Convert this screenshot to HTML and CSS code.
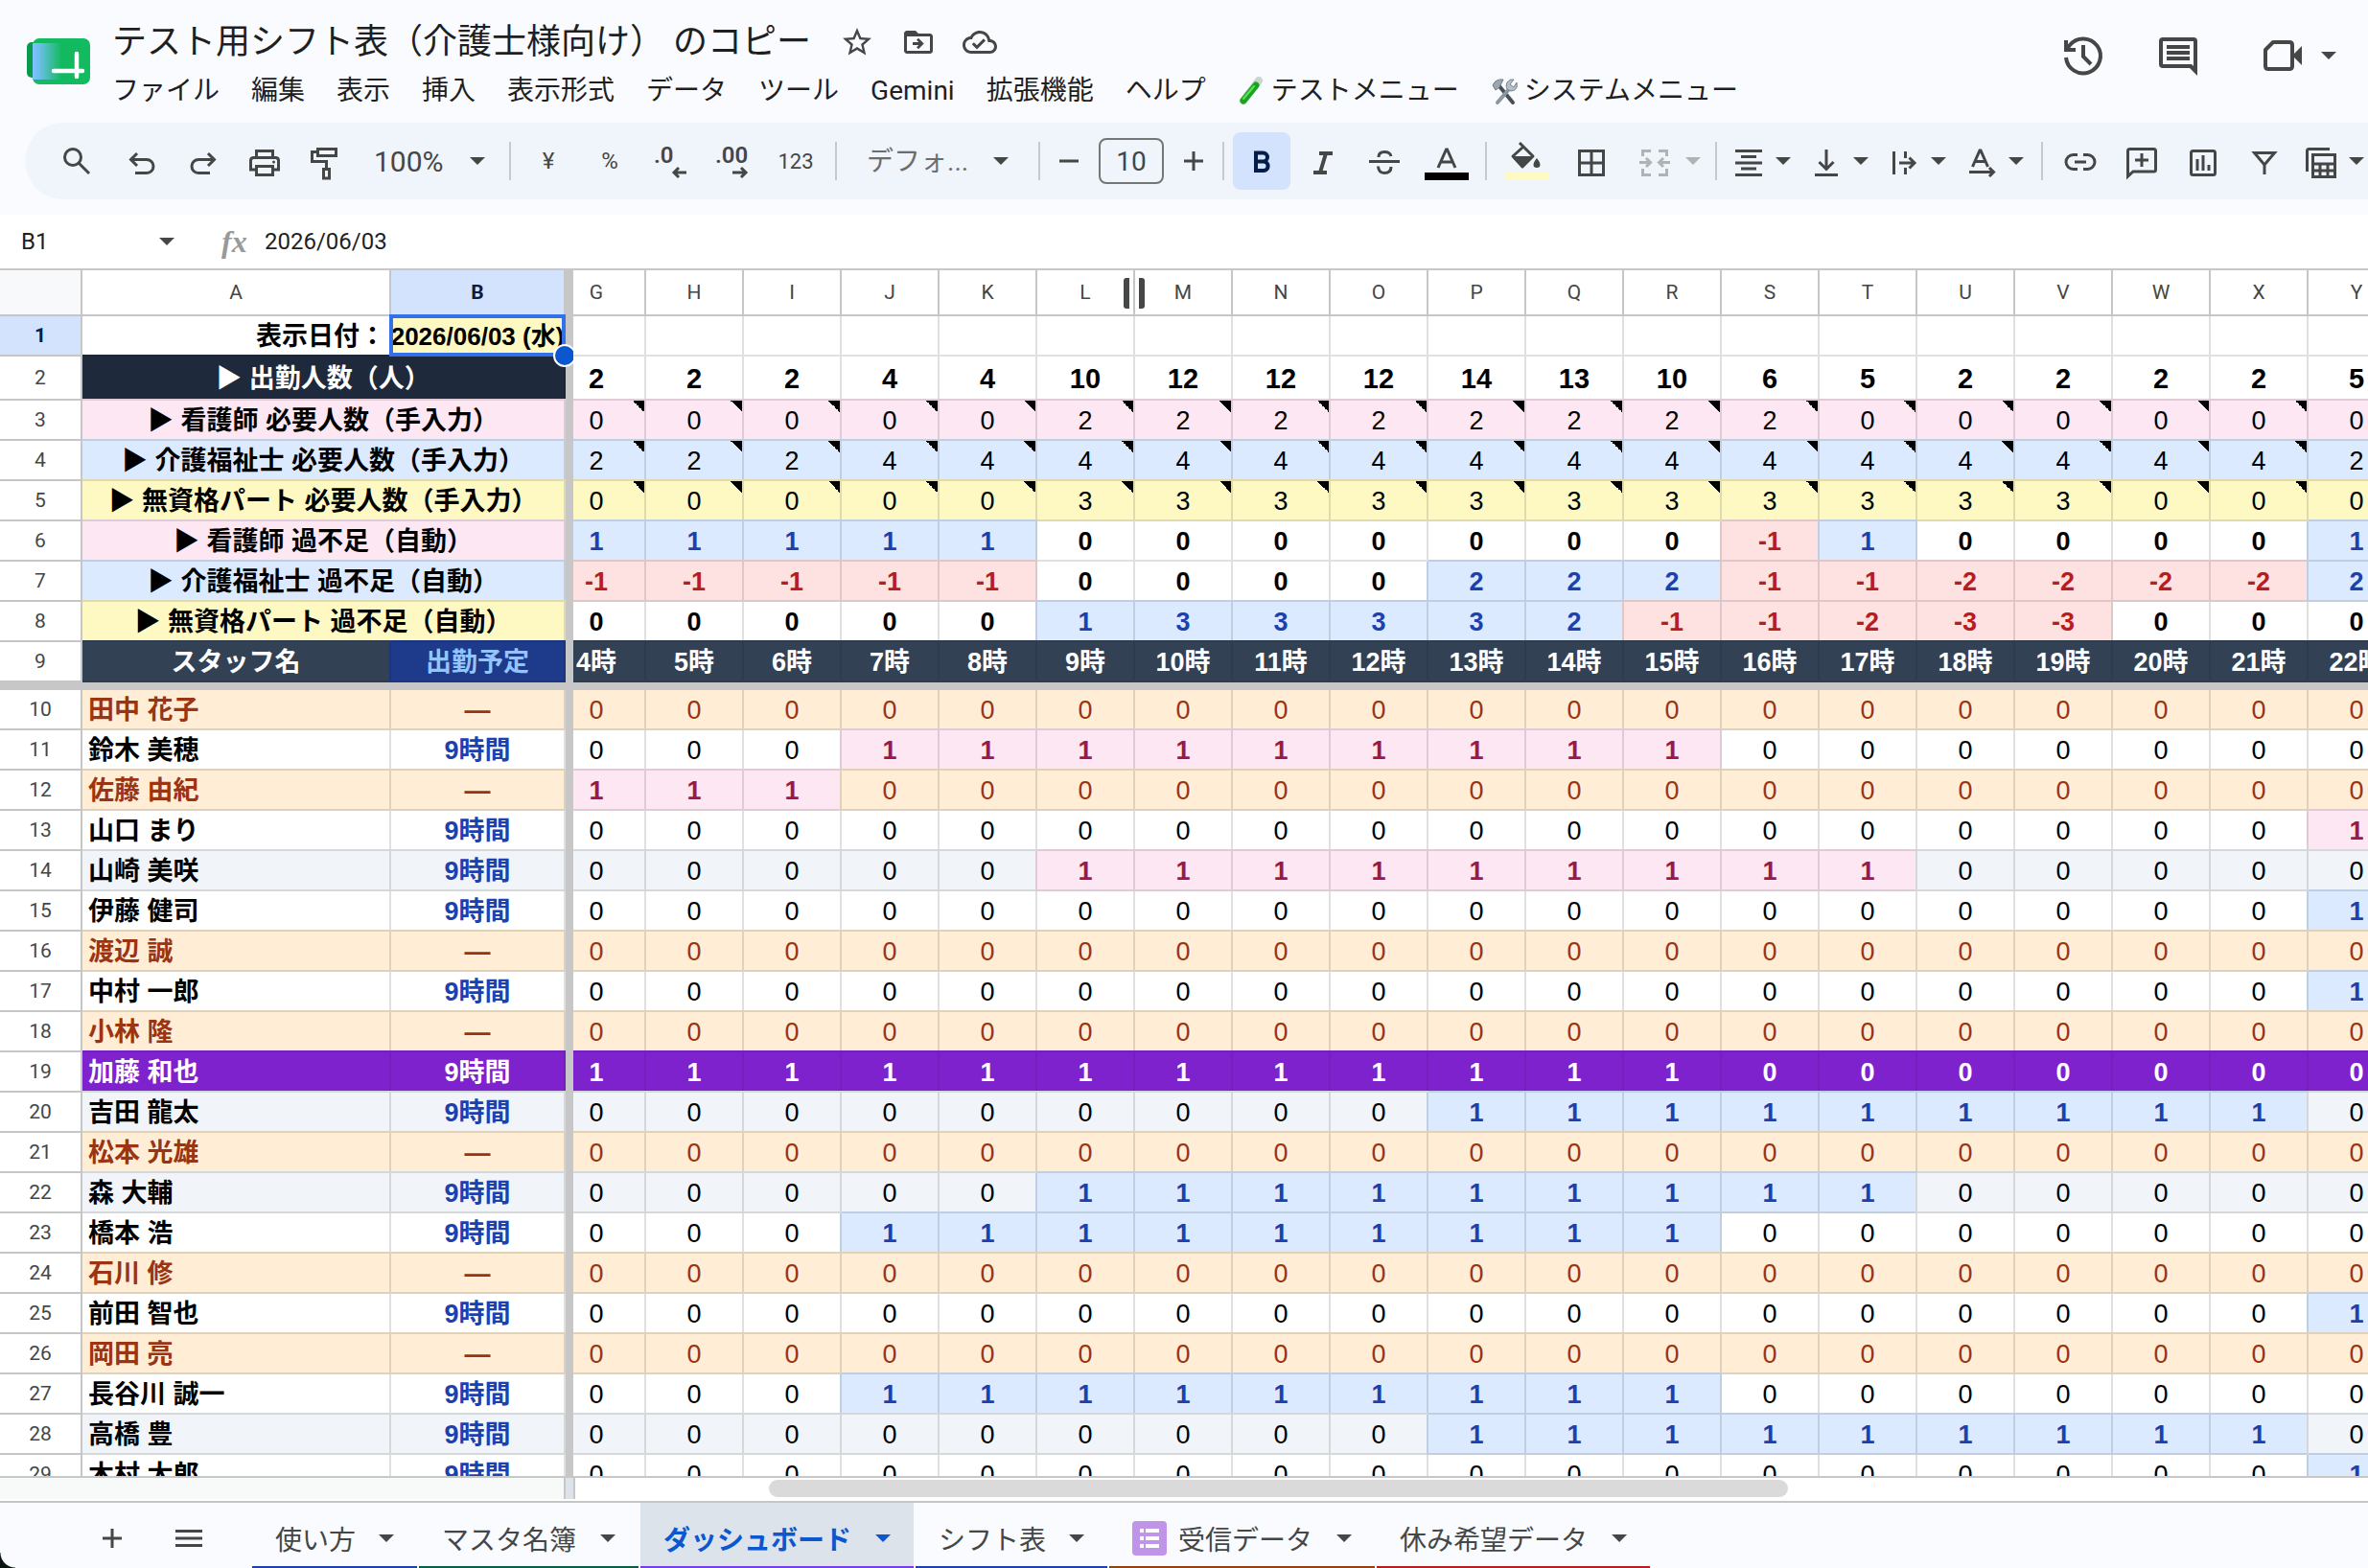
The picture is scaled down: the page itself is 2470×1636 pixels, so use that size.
FILE: index.html
```html
<!DOCTYPE html>
<html lang="ja">
<head>
<meta charset="utf-8">
<title>テスト用シフト表（介護士様向け） のコピー</title>
<link rel="stylesheet" href="styles.css">
</head>
<body>
<header class="top">
  <a class="logo" href="#" aria-label="ホーム">
    <svg width="66" height="48" viewBox="0 0 66 48">
      <defs><linearGradient id="lg" x1="0" x2="1" y1="0" y2="0"><stop offset="0" stop-color="#7cc3ff"/><stop offset=".12" stop-color="#6fc0ee"/><stop offset=".6" stop-color="#12b95f"/></linearGradient></defs>
      <rect x="0" y="4" width="20" height="37" rx="5" fill="#0a9a4c"/>
      <rect x="6" y="0" width="60" height="48" rx="7" fill="#12bb60"/>
      <rect x="6" y="5" width="50" height="38" fill="url(#lg)"/>
      <path d="M28 34H58M52 16V40" stroke="#fff" stroke-width="4.5" stroke-linecap="round"/>
    </svg>
  </a>
  <div class="head-main">
    <div class="title-row">
      <h1 class="title">テスト用シフト表（介護士様向け） のコピー</h1>
      <button class="mini" aria-label="スター"><svg width="36" height="36" viewBox="0 0 24 24"><path fill="currentColor" d="M22 9.24l-7.19-.62L12 2 9.19 8.63 2 9.24l5.46 4.73L5.82 21 12 17.27 18.18 21l-1.63-7.03L22 9.24zM12 15.4l-3.76 2.27 1-4.28-3.32-2.88 4.38-.38L12 6.1l1.71 4.04 4.38.38-3.32 2.88 1 4.28L12 15.4z"/></svg></button>
      <button class="mini" aria-label="移動"><svg width="36" height="36" viewBox="0 0 24 24"><path fill="currentColor" fill-rule="evenodd" d="M20 6h-8l-2-2H4c-1.100 0-2 .9-2 2v12c0 1.100.9 2 2 2h16c1.100 0 2-.9 2-2V8c0-1.100-.9-2-2-2zm0 12H4V8h16v10zM8 12v2h4.200l-1.500 1.500 1.300 1.300 3.800-3.800L12 9.200l-1.300 1.300 1.500 1.500z"/></svg></button>
      <button class="mini" aria-label="保存済み"><svg width="36" height="36" viewBox="0 0 24 24"><path fill="currentColor" d="M19.35 10.04C18.67 6.59 15.64 4 12 4 9.11 4 6.6 5.64 5.35 8.04 2.34 8.36 0 10.91 0 14c0 3.310 2.690 6 6 6h13c2.760 0 5-2.240 5-5 0-2.640-2.050-4.780-4.650-4.960zM19 18H6c-2.210 0-4-1.790-4-4 0-2.050 1.530-3.760 3.560-3.970l1.070-.11.5-.95C8.080 7.140 9.940 6 12 6c2.620 0 4.880 1.860 5.390 4.430l.3 1.500 1.530.11c1.560.1 2.780 1.410 2.780 2.960 0 1.650-1.350 3-3 3zm-9-3.820l-2.090-2.090L6.500 13.500 10 17l6.010-6.010-1.410-1.410z"/></svg></button>
    </div>
    <nav class="menu">
      <button>ファイル</button><button>編集</button><button>表示</button><button>挿入</button><button>表示形式</button><button>データ</button><button>ツール</button><button>Gemini</button><button>拡張機能</button><button>ヘルプ</button>
      <button><svg width="28" height="30" viewBox="0 0 28 30"><path d="M22 4L6 25" stroke="#c9d6cf" stroke-width="8" stroke-linecap="round"/><path d="M19 9L6 25" stroke="#17a51f" stroke-width="7" stroke-linecap="round"/><path d="M17 10L6 23" stroke="#5fe05a" stroke-width="2" stroke-linecap="round"/></svg>テストメニュー</button>
      <button><svg width="28" height="30" viewBox="0 0 28 30"><path d="M9 10L23 27" stroke="#4b4f55" stroke-width="4" stroke-linecap="round"/><path d="M2 9Q5 2 13 3L9 11L5 14Z" fill="#9aa7b3" stroke="#6d7882"/><path d="M19 13L7 27" stroke="#8c969f" stroke-width="4" stroke-linecap="round"/><path d="M24 3L20 8L24 11L27 6Q29 14 21 15Q14 13 17 6Q20 2 24 3Z" fill="#b4bfc9" stroke="#77828c"/></svg>システムメニュー</button>
    </nav>
  </div>
  <div class="head-actions">
    <button aria-label="変更履歴"><svg width="48" height="48" viewBox="0 0 48 48" fill="none" stroke="currentColor" stroke-width="4"><path d="M6 26A18 18 0 1 0 10 13L6 18"/><path d="M6 8V18H16M24 13V25L32 33"/></svg></button>
    <button aria-label="コメント"><svg width="48" height="48" viewBox="0 0 48 48"><path fill="currentColor" fill-rule="evenodd" d="M8 5H40Q44 5 44 9V45L36 37H8Q4 37 4 33V9Q4 5 8 5ZM8 9V33H38L40 35V9ZM12 13H36V17H12ZM12 19H36V23H12ZM12 25H36V29H12Z"/></svg></button>
    <button class="meet" aria-label="ビデオ通話"><svg width="48" height="48" viewBox="0 0 48 48"><path d="M14 10H31Q34 10 34 13V35Q34 38 31 38H9Q6 38 6 35V18Z" fill="none" stroke="currentColor" stroke-width="4" stroke-linejoin="round"/><path d="M34 24L44 14V34Z" fill="currentColor"/></svg><i class="caret"></i></button>
  </div>
</header>

<div class="toolbar" role="toolbar">
  <button class="tb search" aria-label="検索"><svg class="ic" viewBox="0 0 40 40"><circle cx="16" cy="16" r="8.500"/><path d="M22 22L33 33"/></svg></button>
  <button class="tb" aria-label="元に戻す"><svg class="ic" viewBox="0 0 40 40"><path d="M15 12L8.500 18.500L15 25M9 18.500H25A6.500 6.500 0 0 1 25 32.500H13"/></svg></button>
  <button class="tb" aria-label="やり直し"><svg class="ic" viewBox="0 0 40 40"><path d="M25 12L31.500 18.500L25 25M31 18.500H15A6.500 6.500 0 0 0 15 32.500H27"/></svg></button>
  <button class="tb" aria-label="印刷"><svg class="ic" viewBox="0 0 40 40"><path d="M11.500 16V9.500H28.500V16M11 29H5.500V19.500Q5.500 16.500 8.500 16.500H31.500Q34.500 16.500 34.500 19.500V29H29M11.500 25.500H28.500V34.500H11.500Z"/><circle class="dot" cx="29.500" cy="21" r="1.500"/></svg></button>
  <button class="tb" aria-label="書式を貼り付け"><svg class="ic" viewBox="2 0 40 40"><path d="M13.500 7.500H32.500V14.500H13.500ZM13 10.500H7.500V20.500H22.500V27M19.500 28.500H25.500V38H19.500Z"/></svg></button>
  <span class="pick zoom"><select aria-label="ズーム"><option>100%</option></select><i class="caret"></i></span>
  <i class="sep"></i>
  <button class="tb t24">¥</button>
  <button class="tb t24">%</button>
  <button class="tb" aria-label="小数点以下を減らす"><svg class="ic" viewBox="0 0 40 40"><text x="2" y="22">.0</text><path d="M36 32H23M28 27L23 32L28 37"/></svg></button>
  <button class="tb" aria-label="小数点以下を増やす"><svg class="ic" viewBox="0 0 40 40"><text x="2" y="22">.00</text><path d="M20 32H34M29 27L34 32L29 37"/></svg></button>
  <button class="tb t22">123</button>
  <i class="sep"></i>
  <span class="pick face"><select aria-label="フォント"><option>デフォ...</option></select><i class="caret"></i></span>
  <i class="sep"></i>
  <button class="tb step" aria-label="縮小"><svg width="22" height="22" viewBox="0 0 22 22"><path d="M1 11H21" stroke="currentColor" stroke-width="3"/></svg></button>
  <input class="size" aria-label="フォントサイズ" value="10">
  <button class="tb step" aria-label="拡大"><svg width="22" height="22" viewBox="0 0 22 22"><path d="M1 11H21M11 1V21" stroke="currentColor" stroke-width="3"/></svg></button>
  <i class="sep"></i>
  <button class="tb on" aria-label="太字"><svg class="ic" viewBox="0 0 40 40"><path class="heavy" d="M14 11.500H21.500A4.500 4.500 0 0 1 21.500 20.500H14ZM14 20.500H22.500A4.800 4.800 0 0 1 22.500 30H14Z"/></svg></button>
  <button class="tb" aria-label="斜体"><svg class="ic" viewBox="0 0 40 40"><path class="heavy" d="M16 12H30M10 32H24M23 12L17 32"/></svg></button>
  <button class="tb" aria-label="取り消し線"><svg class="ic" viewBox="0 0 40 40"><path d="M4 20.500H36M27 15Q26 10.500 20 10.500Q14 10.500 14 16M13.500 25.500Q14 32.500 20 32.500Q27 32.500 27 26"/></svg></button>
  <button class="tb w62" aria-label="文字色"><svg width="46" height="40" viewBox="0 0 46 40"><path d="M14 27L22.500 8H23.500L32 27M17 21H29" fill="none" stroke="currentColor" stroke-width="3"/><rect y="32" width="46" height="8"/></svg></button>
  <i class="sep"></i>
  <button class="tb w66" aria-label="塗りつぶし"><svg width="46" height="44" viewBox="0 -2 46 44"><path d="M15 1L29 15L18 26L8 15L18 6" fill="none" stroke="currentColor" stroke-width="3" stroke-linejoin="round"/><path d="M8 15H29L18 26Z" fill="currentColor"/><path d="M33 17Q38 23 36 26Q33 28 30 26Q28 23 33 17Z" fill="currentColor"/><rect y="32" width="46" height="8" fill="#fff9c4"/></svg></button>
  <button class="tb" aria-label="枠線"><svg class="ic" viewBox="0 0 40 40"><path d="M7.500 9.500H32.500V34.500H7.500ZM20 9V35M7 22H33"/></svg></button>
  <button class="tb merge" aria-label="セルを結合"><svg class="ic" viewBox="0 0 40 40"><path d="M16 9.500H7.500V15M24 9.500H32.500V15M16 34.500H7.500V28M24 34.500H32.500V28M4 21.500H15M11 17L15.500 21.500L11 26M36 21.500H25M29 17L24.500 21.500L29 26"/></svg><i class="caret"></i></button>
  <i class="sep"></i>
  <button class="tb duo" aria-label="水平方向の配置"><svg class="ic" viewBox="0 0 40 40"><path d="M6 9.500H34M12 15.500H28M6 22H34M12 28H28M6 34.500H34"/></svg><i class="caret"></i></button>
  <button class="tb duo" aria-label="垂直方向の配置"><svg class="ic" viewBox="0 0 40 40"><path d="M20 8V28M12.500 21L20 28.500L27.500 21M8 34.500H32"/></svg><i class="caret"></i></button>
  <button class="tb duo" aria-label="折り返し"><svg class="ic" viewBox="0 0 40 40"><path d="M9.500 10V34M21.500 10V17M21.500 27V34M15 22H30M25.500 16.500L31 22L25.500 27.500"/></svg><i class="caret"></i></button>
  <button class="tb duo" aria-label="回転"><svg class="ic" viewBox="0 0 40 40"><path d="M10.500 26L18 9H19L26.500 26M13 20.500H24M7 31.500H32M28 27L32.500 31.500L28 36"/></svg><i class="caret"></i></button>
  <i class="sep"></i>
  <button class="tb" aria-label="リンク"><svg class="ic" viewBox="0 0 40 40"><path d="M17 13.500H12.500A7 7 0 0 0 12.500 28.500H17M23 13.500H27.500A7 7 0 0 1 27.500 28.500H23M14 21H26"/></svg></button>
  <button class="tb" aria-label="コメントを挿入"><svg class="ic" viewBox="0 0 40 40"><path d="M5.500 36V9.500Q5.500 7.500 7.500 7.500H32.500Q34.500 7.500 34.500 9.500V29Q34.500 31 32.500 31H11ZM20 12V26M13 19H27"/></svg></button>
  <button class="tb" aria-label="グラフ"><svg class="ic" viewBox="0 0 40 40"><path d="M9.500 9.500H30.500Q32.500 9.500 32.500 11.500V32.500Q32.500 34.500 30.500 34.500H9.500Q7.500 34.500 7.500 32.500V11.500Q7.500 9.500 9.500 9.500ZM14 18V30M20 14V30M26 24V30"/></svg></button>
  <button class="tb" aria-label="フィルタ"><svg class="ic" viewBox="0 0 40 40"><path d="M9.500 11.500H30.500L20 24ZM20 23V34"/></svg></button>
  <button class="tb last" aria-label="表"><svg class="ic" viewBox="0 0 40 40"><path d="M5.500 31V9.500Q5.500 7.500 7.500 7.500H29M11.500 13.500H34.500V36.500H11.500ZM11 23H35M11 30H35M19 23V37M27 23V37"/></svg><i class="caret"></i></button>
</div>

<div class="formula">
  <input class="namebox" aria-label="名前ボックス" value="B1">
  <button class="plain" aria-label="名前の一覧"><i class="caret"></i></button>
  <label class="fx" for="fx">fx</label>
  <input class="fxin" id="fx" value="2026/06/03">
</div>

<main class="sheet">
  <div class="pane frozen"><table id="left"></table><i class="vbar"></i></div>
  <div class="pane scrolled"><table id="right"></table></div>
</main>

<div class="hscroll"><i class="gutter"></i><i class="grip"></i><div class="track"><i class="thumb"></i></div></div>

<footer class="tabs">
  <div class="tab-tools">
    <button class="plain" aria-label="シートを追加"><svg width="40" height="40" viewBox="0 0 40 40"><path d="M10 20H30M20 10V30" stroke="currentColor" stroke-width="3"/></svg></button>
    <button class="plain" aria-label="すべてのシート"><svg width="40" height="40" viewBox="0 0 40 40"><path d="M6 12.500H34M6 20H34M6 27.500H34" stroke="currentColor" stroke-width="3"/></svg></button>
  </div>
  <button class="tab u-blue">使い方<i class="caret"></i></button>
  <button class="tab u-green">マスタ名簿<i class="caret"></i></button>
  <button class="tab u-violet active">ダッシュボード<i class="caret"></i></button>
  <button class="tab u-blue">シフト表<i class="caret"></i></button>
  <button class="tab u-brown"><svg class="form" width="36" height="36" viewBox="0 0 36 36"><rect width="36" height="36" rx="4" fill="#c094e8"/><path d="M8 10H12M14 10H28M8 18H12M14 18H28M8 26H12M14 26H28" stroke="#fff" stroke-width="4"/></svg>受信データ<i class="caret"></i></button>
  <button class="tab u-red">休み希望データ<i class="caret"></i></button>
  <i class="corner"></i>
</footer>
<script src="app.js"></script>
</body>
</html>
```
FILE: styles.css
```css
* { box-sizing: border-box; }
html, body { height: 100%; }
body {
  margin: 0;
  display: flex;
  flex-direction: column;
  overflow: hidden;
  background: #f9fbfe;
  color: #1f1f1f;
  font-family: Roboto, "Noto Sans CJK JP", sans-serif;
}
button, input, select { font: inherit; color: inherit; margin: 0; padding: 0; border: 0; background: none; outline: 0; }
button { display: inline-flex; align-items: center; justify-content: center; }
svg { display: block; flex: none; }
i { font-style: normal; flex: none; }

.caret { width: 16px; height: 8px; background: currentColor; clip-path: polygon(0 0, 100% 0, 50% 100%); }

/* Title and menus */
.top { display: flex; flex: none; height: 128px; color: #444746; }
.logo { margin: 40px 23px 0 28px; }
.head-main { flex: 1; min-width: 0; padding-top: 17px; }
.title-row { display: flex; align-items: center; height: 54px; }
.title { margin: 0 30px 0 0; font-size: 36px; font-weight: 400; line-height: 54px; color: #1f1f1f; white-space: nowrap; }
.mini { width: 36px; height: 36px; margin-right: 28px; }
.menu { display: flex; gap: 33px; height: 48px; color: #1f1f1f; }
.menu button { font-size: 28px; line-height: 48px; white-space: nowrap; gap: 7px; }
.head-actions { display: flex; align-items: flex-start; gap: 51px; padding: 34px 33px 0 0; }
.meet { gap: 16px; padding-left: 10px; }

/* Toolbar */
.toolbar {
  display: flex;
  flex: none;
  align-items: center;
  gap: 4px;
  height: 80px;
  margin-left: 26px;
  padding-left: 24px;
  border-radius: 40px 0 0 40px;
  background: #f0f4fb;
  color: #444746;
  overflow: hidden;
}
.tb { flex: none; width: 60px; height: 60px; border-radius: 8px; }
.search { margin-right: 4px; }
.ic { width: 40px; height: 40px; fill: none; stroke: currentColor; stroke-width: 3; }
.ic text { fill: currentColor; stroke: none; font-size: 24px; font-weight: 600; }
.ic .dot { fill: currentColor; stroke: none; }
.ic .heavy { stroke-width: 4; }
.sep { width: 2px; height: 40px; margin: 0 5px; background: #c7c9cc; }
.t24 { font-size: 24px; }
.t22 { font-size: 22px; width: 64px; }
.w62 { width: 62px; }
.w66 { width: 66px; }
.step { width: 42px; }
.on { background: #d3e3fd; color: #041e49; }
.pick { display: grid; flex: none; align-items: center; height: 60px; }
.pick > * { grid-area: 1 / 1; }
.pick select { appearance: none; width: 100%; height: 60px; font-size: 28px; }
.pick .caret { justify-self: end; pointer-events: none; }
.zoom { width: 148px; padding: 0 16px; }
.zoom select { font-size: 30px; }
.face { width: 192px; padding: 0 22px; }
.face select { color: #6b6e6e; }
.face .caret { color: #444746; }
.size { width: 68px; height: 48px; margin: 0 6px; border: 2px solid #747775; border-radius: 8px; font-size: 28px; text-align: center; }
.merge { width: 86px; justify-content: flex-start; padding-left: 12px; gap: 12px; color: #b0b3b6; }
.duo { width: 77px; justify-content: flex-start; padding-left: 4px; gap: 8px; }
.last { width: 80px; justify-content: flex-start; padding-left: 5px; gap: 9px; }

/* Formula bar */
.formula { display: flex; flex: none; align-items: center; height: 58px; margin-top: 16px; background: #fff; border-bottom: 2px solid #c7c7c7; font-size: 24px; color: #444746; }
.namebox { width: 144px; padding-left: 22px; color: #1f1f1f; }
.plain { flex: none; }
.formula .plain { width: 60px; height: 48px; }
.fx { width: 45px; margin-left: 27px; font: italic 700 32px "Liberation Serif", serif; color: #999; }
.fxin { flex: 1; color: #1f1f1f; }

/* Grid */
.sheet { display: flex; flex: 1; min-height: 0; background: #fff; overflow: hidden; font: 27px "Liberation Sans", "Noto Sans CJK JP", sans-serif; color: #000; }
.pane { overflow: hidden; }
.frozen { display: flex; flex: none; }
.scrolled { flex: 1; min-width: 0; }
.scrolled table { margin-left: -26px; }
.vbar { width: 8px; background: #c7c7c7; }
table { flex: none; table-layout: fixed; border-collapse: separate; border-spacing: 0; }
#left { width: 590px; }
#right { width: 1938px; }
.w-num { width: 86px; }
.w-a { width: 322px; }
.w-b { width: 182px; }
.w-h { width: 102px; }
tr { height: 42px; }
.r-head { height: 48px; }
.r-2 { height: 46px; }
.r-gap { height: 8px; }
th, td {
  --bg: #fff;
  --line: color-mix(in srgb, var(--bg), #000 12%);
  padding: 2px 0 0;
  border: solid var(--line);
  border-width: 0 2px 2px 0;
  background: var(--bg);
  text-align: center;
  white-space: nowrap;
  overflow: hidden;
  line-height: 36px;
}
th { position: relative; padding: 0; border-color: #c4c7c5; font: 400 21px/36px Roboto, sans-serif; color: #444746; }
th.corner-cell { background: #f8f9fa; }
th.sel { background: #d3e3fd; color: #041e49; font-weight: 700; }
.r-gap td { position: relative; padding: 0; border: 0; background: #c7c7c7; line-height: 0; }
.b { font-weight: 700; }
.total { font-size: 29px; }
.blue, .red, .pink, .yellow, .alt, .off, .purple, .navy, .slate, .royal {
  box-shadow: -2px 0 var(--line), 0 -2px var(--line);
}
.blue { --bg: #dbeafe; }
.red { --bg: #fee2e2; color: #b91c1c; }
.pink { --bg: #fce7f3; }
.yellow { --bg: #fef9c3; }
.alt { --bg: #f1f5f9; }
.off { --bg: #ffedd5; color: #9a3412; }
.purple { --bg: #7e22ce; color: #fff; }
.navy { --bg: #1e293b; color: #fff; }
.slate { --bg: #334155; color: #fff; }
.royal { --bg: #1e3a8a; color: #93c5fd; }
.navy, .slate, .royal, .purple { --line: color-mix(in srgb, var(--bg), #000 8%); }
.ink-blue { color: #1e40af; }
.ink-rose { color: #9d174d; }
.name { text-align: left; padding-left: 6px; }
.label { text-align: right; padding-right: 4px; }
.tri { font-family: "Noto Sans CJK JP", sans-serif; line-height: 30px; }
.note { background: linear-gradient(to top right, transparent 50%, #000 50%) top right / 12px 12px no-repeat var(--bg); }
.active-cell { position: relative; overflow: visible; background: #fef9c3; font-size: 26px; }
.clip { display: flex; justify-content: center; overflow: hidden; height: 36px; }
.active-cell::before { content: ""; position: absolute; inset: -2px -2px -2px -2px; border: 4px solid #3271ea; }
.active-cell::after { content: ""; position: absolute; right: -13px; bottom: -13px; width: 20px; height: 20px; border: 2px solid #fff; border-radius: 50%; background: #0b57d0; }
.has-handle { overflow: visible; z-index: 1; }
.handle { position: absolute; right: -12px; top: 8px; width: 22px; height: 32px; border: solid #444746; border-width: 0 6px; border-radius: 3px; }

/* Horizontal scroll bar */
.hscroll { display: flex; flex: none; height: 26px; background: #fff; border-top: 2px solid #c7c7c7; }
.gutter { width: 588px; height: 22px; background: #f8f9f9; }
.grip { width: 12px; height: 22px; background: #dde3ea; border: solid #c7c7c7; border-width: 0 2px; }
.track { flex: 1; padding: 2px 605px 0 202px; }
.thumb { display: block; height: 18px; border-radius: 9px; background: #dadada; }

/* Sheet tabs */
.tabs { position: relative; display: flex; flex: none; gap: 2px; height: 70px; border-top: 2px solid #c4c7c5; color: #444746; }
.tab-tools { display: flex; align-items: center; gap: 40px; width: 261px; padding: 6px 0 0 97px; }
.tab { flex: none; gap: 25px; padding: 8px 24px 0; border-bottom: 2px solid; font-size: 28px; white-space: nowrap; }
.tab .form { margin-right: -13px; }
.u-blue { border-color: #1e40af; gap: 24px; }
.u-green { border-color: #065f46; }
.u-violet { border-color: #7c3aed; }
.u-brown { border-color: #92400e; }
.u-red { border-color: #b91c1c; }
.active { background: #dde3ea; color: #0b57d0; font-weight: 700; }
.corner { position: absolute; left: 0; bottom: 0; width: 16px; height: 16px; background: radial-gradient(circle at 100% 0, transparent 15px, #0b1512 16px); }
```
FILE: app.js
```js
const COLS = 'GHIJKLMNOPQRSTUVWXY'.split('');
const left = [];
const right = [];

const cell = (text, cls, tag = 'td', extra = '') => `<${tag} class="${cls}"${extra}>${text}</${tag}>`;
const addRow = (n, leftCells, rightCells, rowCls = '') => {
  left.push(`<tr class="${rowCls}">${cell(n, n === 1 ? 'sel' : '', 'th', ' scope="row"')}${leftCells}</tr>`);
  right.push(`<tr class="${rowCls}">${rightCells}</tr>`);
};
const list = (s) => s.split(' ');

// Column letters
left.push('<colgroup><col class="w-num"><col class="w-a"><col class="w-b"></colgroup>' +
  `<tr class="r-head">${cell('', 'corner-cell', 'th')}${cell('A', '', 'th')}${cell('B', 'sel', 'th')}</tr>`);
right.push(`<colgroup>${'<col class="w-h">'.repeat(COLS.length)}</colgroup><tr class="r-head">` +
  COLS.map((c) => c === 'L' ? cell('L<i class="handle"></i>', 'has-handle', 'th') : cell(c, '', 'th')).join('') + '</tr>');

// Summary rows
addRow(1, cell('表示日付：', 'b label') + cell('<div class="clip">2026/06/03 (水)</div>', 'b active-cell'),
  COLS.map(() => cell('', '')).join(''));

const head = (text, cls) => cell(`<span class="tri">▶</span> ${text}`, `b ${cls}`, 'td', ' colspan="2"');
addRow(2, head('出勤人数（人）', 'navy'),
  list('2 2 2 4 4 10 12 12 12 14 13 10 6 5 2 2 2 2 5').map((v) => cell(v, 'b total')).join(''), 'r-2');

[
  [3, '看護師 必要人数（手入力）', 'pink', '0 0 0 0 0 2 2 2 2 2 2 2 2 0 0 0 0 0 0'],
  [4, '介護福祉士 必要人数（手入力）', 'blue', '2 2 2 4 4 4 4 4 4 4 4 4 4 4 4 4 4 4 2'],
  [5, '無資格パート 必要人数（手入力）', 'yellow', '0 0 0 0 0 3 3 3 3 3 3 3 3 3 3 3 0 0 0'],
].forEach(([n, text, cls, v]) => addRow(n, head(text, cls), list(v).map((x) => cell(x, `${cls} note`)).join('')));

[
  [6, '看護師 過不足（自動）', 'pink', '1 1 1 1 1 0 0 0 0 0 0 0 -1 1 0 0 0 0 1'],
  [7, '介護福祉士 過不足（自動）', 'blue', '-1 -1 -1 -1 -1 0 0 0 0 2 2 2 -1 -1 -2 -2 -2 -2 2'],
  [8, '無資格パート 過不足（自動）', 'yellow', '0 0 0 0 0 1 3 3 3 3 2 -1 -1 -2 -3 -3 0 0 0'],
].forEach(([n, text, cls, v]) => addRow(n, head(text, cls),
  list(v).map((x) => cell(x, x > 0 ? 'b blue ink-blue' : x < 0 ? 'b red' : 'b')).join('')));

addRow(9, cell('スタッフ名', 'b slate') + cell('出勤予定', 'b royal'),
  COLS.map((c, i) => cell(`${i + 4}時`, 'b slate')).join(''));
left.push('<tr class="r-gap"><td colspan="3"></td></tr>');
right.push(`<tr class="r-gap"><td colspan="${COLS.length}"></td></tr>`);

// Staff rows: name, row style, shift style, first and last column of the shift
[
  ['田中 花子', 'off'],
  ['鈴木 美穂', '', 'pink ink-rose', 'J', 'R'],
  ['佐藤 由紀', 'off', 'pink ink-rose', 'G', 'I'],
  ['山口 まり', '', 'pink ink-rose', 'Y', 'Y'],
  ['山崎 美咲', 'alt', 'pink ink-rose', 'L', 'T'],
  ['伊藤 健司', '', 'blue ink-blue', 'Y', 'Y'],
  ['渡辺 誠', 'off'],
  ['中村 一郎', '', 'blue ink-blue', 'Y', 'Y'],
  ['小林 隆', 'off'],
  ['加藤 和也', 'purple b', 'purple', 'G', 'R'],
  ['吉田 龍太', 'alt', 'blue ink-blue', 'P', 'X'],
  ['松本 光雄', 'off'],
  ['森 大輔', 'alt', 'blue ink-blue', 'L', 'T'],
  ['橋本 浩', '', 'blue ink-blue', 'J', 'R'],
  ['石川 修', 'off'],
  ['前田 智也', '', 'blue ink-blue', 'Y', 'Y'],
  ['岡田 亮', 'off'],
  ['長谷川 誠一', '', 'blue ink-blue', 'J', 'R'],
  ['高橋 豊', 'alt', 'blue ink-blue', 'P', 'X'],
  ['木村 太郎', '', 'blue ink-blue', 'Y', 'Y'],
].forEach(([name, row, shift, from, to], i) => {
  const hours = row === 'off' ? cell('—', 'b off')
    : cell('9時間', `b ${row} ${row.startsWith('purple') ? '' : 'ink-blue'}`);
  addRow(i + 10, cell(name, `b name ${row}`) + hours,
    COLS.map((c) => (shift && c >= from && c <= to) ? cell('1', `b ${shift}`) : cell('0', row)).join(''));
});

document.getElementById('left').innerHTML = left.join('');
document.getElementById('right').innerHTML = right.join('');
```
